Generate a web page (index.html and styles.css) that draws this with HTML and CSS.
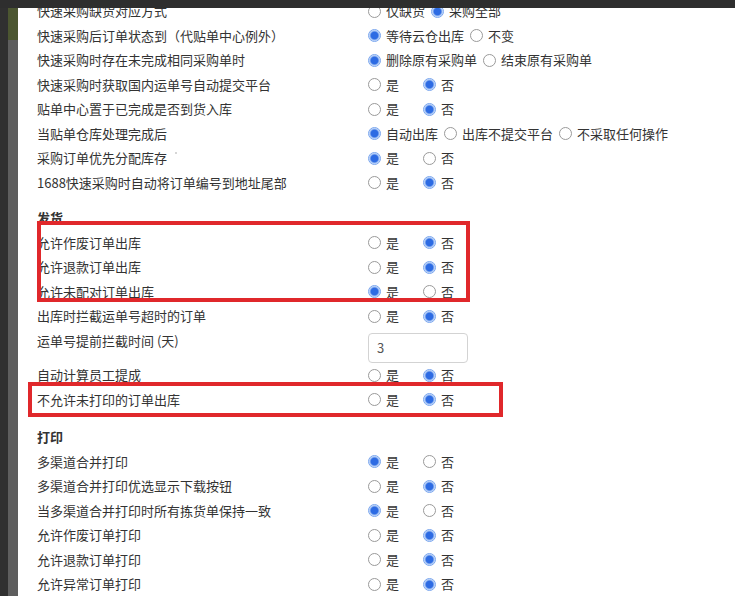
FILE: index.html
```html
<!DOCTYPE html>
<html lang="zh-CN">
<head>
    <meta charset="UTF-8">
    <meta name="viewport" content="width=device-width, initial-scale=1.0">
    <title>系统设置</title>
    <link rel="stylesheet" href="styles.css">
</head>
<body>

    <div class="topbar"></div>

    <div class="main">
        <div class="side">
            <div class="side-dark"></div>
            <div class="side-grey"><div class="side-green"></div></div>
        </div>

        <div class="dialog">
            <div class="settings">

                <div class="row">
                    <div class="label">快速采购缺货对应方式</div>
                    <div class="opts">
                        <label class="opt"><input type="radio" name="r1"> 仅缺货</label>
                        <label class="opt"><input type="radio" name="r1" checked> 采购全部</label>
                    </div>
                </div>
                <div class="row">
                    <div class="label">快速采购后订单状态到（代贴单中心例外）</div>
                    <div class="opts">
                        <label class="opt"><input type="radio" name="r2" checked> 等待云仓出库</label>
                        <label class="opt"><input type="radio" name="r2"> 不变</label>
                    </div>
                </div>
                <div class="row">
                    <div class="label">快速采购时存在未完成相同采购单时</div>
                    <div class="opts">
                        <label class="opt"><input type="radio" name="r3" checked> 删除原有采购单</label>
                        <label class="opt"><input type="radio" name="r3"> 结束原有采购单</label>
                    </div>
                </div>
                <div class="row">
                    <div class="label">快速采购时获取国内运单号自动提交平台</div>
                    <div class="opts yn">
                        <label class="opt"><input type="radio" name="r4"> 是</label>
                        <label class="opt"><input type="radio" name="r4" checked> 否</label>
                    </div>
                </div>
                <div class="row">
                    <div class="label">贴单中心置于已完成是否到货入库</div>
                    <div class="opts yn">
                        <label class="opt"><input type="radio" name="r5"> 是</label>
                        <label class="opt"><input type="radio" name="r5" checked> 否</label>
                    </div>
                </div>
                <div class="row">
                    <div class="label">当贴单仓库处理完成后</div>
                    <div class="opts">
                        <label class="opt"><input type="radio" name="r6" checked> 自动出库</label>
                        <label class="opt"><input type="radio" name="r6"> 出库不提交平台</label>
                        <label class="opt"><input type="radio" name="r6"> 不采取任何操作</label>
                    </div>
                </div>
                <div class="row">
                    <div class="label">采购订单优先分配库存<span class="tip"></span></div>
                    <div class="opts yn">
                        <label class="opt"><input type="radio" name="r7" checked> 是</label>
                        <label class="opt"><input type="radio" name="r7"> 否</label>
                    </div>
                </div>
                <div class="row">
                    <div class="label">1688快速采购时自动将订单编号到地址尾部</div>
                    <div class="opts yn">
                        <label class="opt"><input type="radio" name="r8"> 是</label>
                        <label class="opt"><input type="radio" name="r8" checked> 否</label>
                    </div>
                </div>

                <div class="section first">发货</div>

                <div class="row">
                    <div class="label">允许作废订单出库</div>
                    <div class="opts yn">
                        <label class="opt"><input type="radio" name="s1"> 是</label>
                        <label class="opt"><input type="radio" name="s1" checked> 否</label>
                    </div>
                </div>
                <div class="row">
                    <div class="label">允许退款订单出库</div>
                    <div class="opts yn">
                        <label class="opt"><input type="radio" name="s2"> 是</label>
                        <label class="opt"><input type="radio" name="s2" checked> 否</label>
                    </div>
                </div>
                <div class="row">
                    <div class="label">允许未配对订单出库</div>
                    <div class="opts yn">
                        <label class="opt"><input type="radio" name="s3" checked> 是</label>
                        <label class="opt"><input type="radio" name="s3"> 否</label>
                    </div>
                </div>
                <div class="row">
                    <div class="label">出库时拦截运单号超时的订单</div>
                    <div class="opts yn">
                        <label class="opt"><input type="radio" name="s4"> 是</label>
                        <label class="opt"><input type="radio" name="s4" checked> 否</label>
                    </div>
                </div>
                <div class="row tall">
                    <div class="label">运单号提前拦截时间 (天)</div>
                    <div class="opts">
                        <input type="text" class="num" value="3">
                    </div>
                </div>
                <div class="row">
                    <div class="label">自动计算员工提成</div>
                    <div class="opts yn">
                        <label class="opt"><input type="radio" name="s5"> 是</label>
                        <label class="opt"><input type="radio" name="s5" checked> 否</label>
                    </div>
                </div>
                <div class="row">
                    <div class="label">不允许未打印的订单出库</div>
                    <div class="opts yn">
                        <label class="opt"><input type="radio" name="s6"> 是</label>
                        <label class="opt"><input type="radio" name="s6" checked> 否</label>
                    </div>
                </div>

                <div class="section">打印</div>

                <div class="row">
                    <div class="label">多渠道合并打印</div>
                    <div class="opts yn">
                        <label class="opt"><input type="radio" name="p1" checked> 是</label>
                        <label class="opt"><input type="radio" name="p1"> 否</label>
                    </div>
                </div>
                <div class="row">
                    <div class="label">多渠道合并打印优选显示下载按钮</div>
                    <div class="opts yn">
                        <label class="opt"><input type="radio" name="p2"> 是</label>
                        <label class="opt"><input type="radio" name="p2" checked> 否</label>
                    </div>
                </div>
                <div class="row">
                    <div class="label">当多渠道合并打印时所有拣货单保持一致</div>
                    <div class="opts yn">
                        <label class="opt"><input type="radio" name="p3" checked> 是</label>
                        <label class="opt"><input type="radio" name="p3"> 否</label>
                    </div>
                </div>
                <div class="row">
                    <div class="label">允许作废订单打印</div>
                    <div class="opts yn">
                        <label class="opt"><input type="radio" name="p4"> 是</label>
                        <label class="opt"><input type="radio" name="p4" checked> 否</label>
                    </div>
                </div>
                <div class="row">
                    <div class="label">允许退款订单打印</div>
                    <div class="opts yn">
                        <label class="opt"><input type="radio" name="p5"> 是</label>
                        <label class="opt"><input type="radio" name="p5" checked> 否</label>
                    </div>
                </div>
                <div class="row">
                    <div class="label">允许异常订单打印</div>
                    <div class="opts yn">
                        <label class="opt"><input type="radio" name="p6"> 是</label>
                        <label class="opt"><input type="radio" name="p6" checked> 否</label>
                    </div>
                </div>

                <!-- 红框标注 -->
                <div class="mark mark-ship"></div>
                <div class="mark mark-print"></div>
            </div>
        </div>
    </div>

</body>
</html>
```

FILE: styles.css
```css
body {
    margin: 0;
    background-color: #333333;
    font-family: "Microsoft YaHei", "Noto Sans CJK SC", "Noto Sans", sans-serif;
    font-size: 13px;
    color: #333333;
    height: 596px;
    overflow: hidden;
}

.topbar {
    height: 8px;
    background-color: #2e2e2e;
}

.main {
    display: flex;
    height: 588px;
}

.side {
    display: flex;
    width: 18px;
    flex-shrink: 0;
}

.side-dark {
    width: 8px;
    background-color: #303030;
}

.side-grey {
    width: 10px;
    background-color: #5e5e5e;
}

.side-green {
    height: 32px;
    background-color: #4c5631;
}

.dialog {
    flex: 1;
    background-color: #ffffff;
    padding-left: 19px;
    overflow: hidden;
}

.settings {
    position: relative;
    margin-top: -9px; /* 对话框已向下滚动 */
}

.row {
    display: grid;
    grid-template-columns: 331px 1fr;
    height: 24.5px;
    line-height: 24.5px;
}

.row.tall {
    height: 34.5px;
}

.label {
    white-space: nowrap;
}

.tip {
    display: inline-block;
    width: 2px;
    height: 2px;
    margin-left: 8px;
    vertical-align: 9px;
    background-color: #c8c8c8;
    border-radius: 50%;
}

.opts {
    display: flex;
    align-items: center;
    height: 24.5px;
    white-space: nowrap;
}

.opt {
    display: inline-flex;
    align-items: center;
    margin-right: 6px;
}

.yn .opt {
    width: 55px;
    margin-right: 0;
}

input[type="radio"] {
    appearance: none;
    -webkit-appearance: none;
    width: 13px;
    height: 13px;
    margin: 0 5px 0 0;
    border: 1px solid #9a9a9a;
    border-radius: 50%;
    background-color: #ffffff;
    box-sizing: border-box;
}

input[type="radio"]:checked {
    border-color: #7aa6ee;
    background: radial-gradient(circle, #2d6be3 0, #2d6be3 3.4px, #8fb4f2 4.4px, #d9e6fb 5.5px);
}

input.num {
    box-sizing: border-box;
    width: 100px;
    height: 30px;
    margin-top: 14px;
    padding: 0 8px;
    border: 1px solid #d3d3d3;
    border-radius: 4px;
    font-family: inherit;
    font-size: 13px;
    color: #555555;
    outline: none;
}

.section {
    margin-top: 13px;
    height: 24.5px;
    line-height: 24.5px;
    font-weight: bold;
}

.section.first {
    margin-top: 11px;
}

.mark {
    position: absolute;
    border: 4px solid #e0282b;
    box-sizing: border-box;
}

.mark-ship {
    left: 0;
    top: 222px;
    width: 433px;
    height: 81px;
}

.mark-print {
    left: -9px;
    top: 383px;
    width: 475px;
    height: 35px;
}
```
